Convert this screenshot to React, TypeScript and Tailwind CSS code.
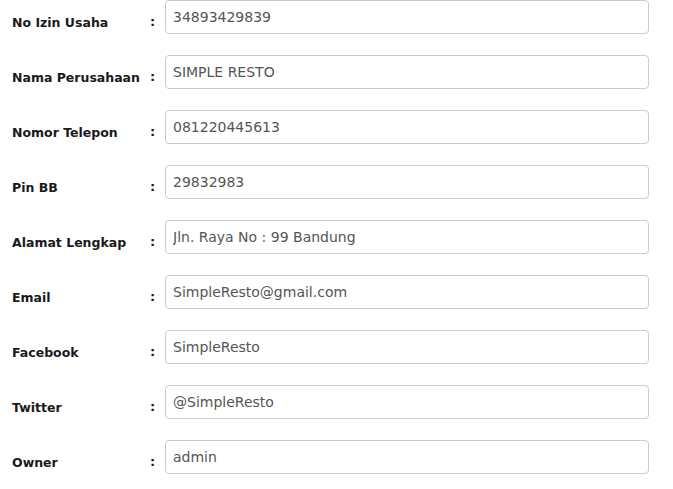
const fields = [
  { label: "No Izin Usaha", value: "34893429839" },
  { label: "Nama Perusahaan", value: "SIMPLE RESTO" },
  { label: "Nomor Telepon", value: "081220445613" },
  { label: "Pin BB", value: "29832983" },
  { label: "Alamat Lengkap", value: "Jln. Raya No : 99 Bandung" },
  { label: "Email", value: "SimpleResto@gmail.com" },
  { label: "Facebook", value: "SimpleResto" },
  { label: "Twitter", value: "@SimpleResto" },
  { label: "Owner", value: "admin" },
];

export default function App() {
  return (
    <div className="min-h-[489px] w-[673px] bg-white pl-3 font-['DejaVu_Sans',sans-serif]">
      {fields.map((field) => (
        <div key={field.label} className="flex h-[55px] items-start">
          <label className="mt-[13px] w-[136px] whitespace-nowrap text-[12.5px] leading-5 font-bold text-[#1a1a1a]">
            {field.label}
          </label>
          <span className="mt-[12px] w-[17px] pl-[2px] text-[13px] leading-5 font-bold text-[#1a1a1a]">
            :
          </span>
          <input
            readOnly
            defaultValue={field.value}
            className="h-[34px] w-[484px] rounded border border-[#ccc] bg-white pl-[7px] text-[14px] text-[#555] outline-none"
          />
        </div>
      ))}
    </div>
  );
}
